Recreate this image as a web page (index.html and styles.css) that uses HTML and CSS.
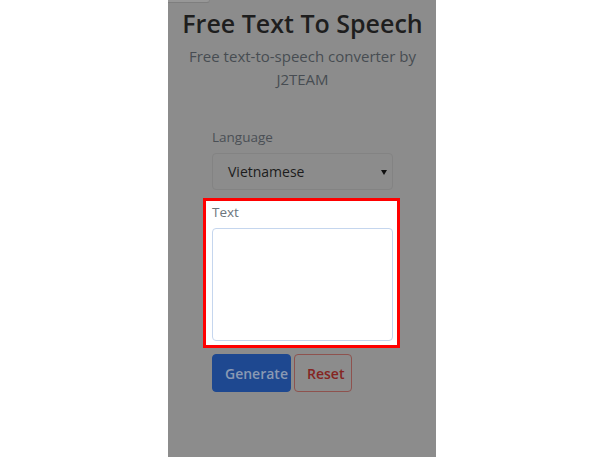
FILE: index.html
```html
<!DOCTYPE html>
<html lang="en">
<head>
<meta charset="utf-8">
<title>Free Text To Speech</title>
<link rel="stylesheet" href="styles.css">
</head>
<body>
<div class="screen">
  <div class="tab"></div>
  <header class="head">
    <h1 class="title">Free Text To Speech</h1>
    <p class="subtitle">Free text-to-speech converter by J2TEAM</p>
  </header>
  <form class="form">
    <div class="field">
      <label class="label">Language</label>
      <div class="select">
        <span class="select-text">Vietnamese</span>
        <span class="caret"></span>
      </div>
    </div>
    <div class="field highlight">
      <label class="label">Text</label>
      <div class="textarea"></div>
    </div>
    <div class="actions">
      <button type="button" class="btn btn-primary">Generate</button>
      <button type="button" class="btn btn-outline">Reset</button>
    </div>
  </form>
</div>
</body>
</html>
```

FILE: styles.css
```css
* { box-sizing: border-box; }
html, body { margin: 0; padding: 0; background: #ffffff; }
body { font-family: "Open Sans", "Noto Sans", sans-serif; }

.screen {
  margin-left: 168px;
  width: 268px;
  height: 457px;
  background: #8c8c8c;
  padding: 0 43px 0 44px;
  display: flex;
  flex-direction: column;
}

.tab {
  width: 42px;
  height: 3px;
  margin-left: -44px;
  background: #979797;
  border-bottom: 1px solid #7e7e7e;
  border-right: 1px solid #858585;
  border-radius: 0 0 3px 0;
}

.head {
  text-align: center;
  margin: 0 -40px;
}
.title {
  margin: 4px 0 0;
  font-size: 25px;
  line-height: 33px;
  font-weight: 600;
  color: #1e1e1e;
}
.subtitle {
  margin: 5px 0 0;
  font-size: 15px;
  line-height: 23px;
  color: #474c52;
  padding: 0 8px;
}

.form {
  margin-top: 36px;
  display: flex;
  flex-direction: column;
}

.field { display: flex; flex-direction: column; }
.label {
  font-size: 13.5px;
  line-height: 20px;
  color: #4a4f55;
  margin-bottom: 6px;
}

.select {
  height: 37px;
  border: 1px solid #838383;
  border-radius: 4px;
  display: flex;
  align-items: center;
  justify-content: space-between;
  padding: 0 5px 0 15px;
}
.select-text { font-size: 14px; color: #1c1c1c; }
.caret {
  width: 0; height: 0;
  border-left: 3px solid transparent;
  border-right: 3px solid transparent;
  border-top: 5px solid #111;
  margin-top: 1px;
}

.highlight {
  margin: 8px -7px 0 -9px;
  padding: 1px 4px 4px 6px;
  background: #ffffff;
  border: 3px solid #ff0000;
}
.highlight .label { color: #6c757d; }
.textarea {
  height: 113px;
  border: 1px solid #c5d6ee;
  border-radius: 4px;
  background: #fff;
}

.actions {
  margin-top: 6px;
  display: flex;
  gap: 3px;
}
.btn {
  height: 38px;
  font-family: inherit;
  font-size: 14px;
  font-weight: 600;
  border-radius: 4px;
  padding: 0 12px;
  cursor: pointer;
}
.btn-primary {
  width: 79px;
  background: #1e4890;
  border: 1px solid #1e4890;
  color: #8a99b3;
}
.btn-outline {
  width: 58px;
  background: transparent;
  border: 1px solid #8e524e;
  color: #852522;
}
```
